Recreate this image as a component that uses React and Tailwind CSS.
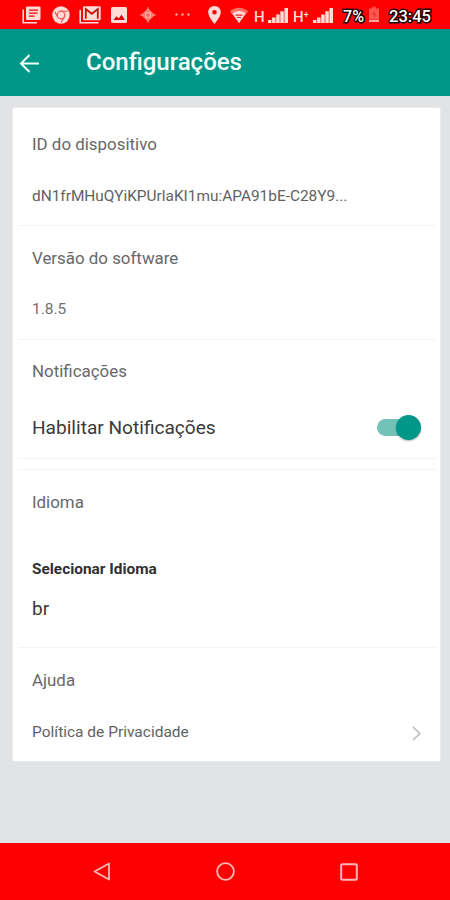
import { clsx } from 'clsx';

function StatusBar() {
  return (
    <div className="flex h-[29px] items-start bg-[#ff0000] pl-[22px] pt-[6px] text-[#ffdcd8]">
      <svg className="h-[18px] w-[19px] shrink-0" viewBox="0 0 19 18" fill="none">
        <path d="M1.2 3.5V16.8H15" stroke="currentColor" strokeWidth="1.6" />
        <rect x="4" y="0.5" width="14.5" height="13.5" rx="1" fill="currentColor" />
        <path d="M7 4.2h9M7 7.2h8.5M7 10.2h5.5" stroke="#f00000" strokeWidth="1.3" />
      </svg>
      <svg className="ml-[11px] h-[18px] w-[18px] shrink-0" viewBox="0 0 18 18" fill="none">
        <circle cx="9" cy="9" r="8.7" fill="currentColor" />
        <circle cx="9" cy="9" r="3.8" stroke="#f05050" strokeWidth="1.2" />
        <path d="M9 5.2h6.8M5.7 11 2.7 5.5M12.3 11 9 16.5" stroke="#f05050" strokeWidth="1.1" />
      </svg>
      <svg className="ml-[9px] h-[18px] w-[22px] shrink-0" viewBox="0 0 22 18" fill="none">
        <path d="M1.2 4V16.8H19.5" stroke="currentColor" strokeWidth="1.6" />
        <rect x="4" y="0.3" width="17.7" height="14" rx="1.2" fill="currentColor" />
        <path d="M6.8 12.8V3l6 4.8 6-4.8v9.8" stroke="#cc1008" strokeWidth="1.8" />
      </svg>
      <svg className="ml-[10px] mt-px h-[16px] w-[16px] shrink-0" viewBox="0 0 16 16">
        <rect width="16" height="16" rx="1.5" fill="currentColor" />
        <path d="M2.5 13 5.5 9.3 7.6 11.6 10.5 7.8 13.8 13Z" fill="#dd0000" />
      </svg>
      <svg className="ml-[13px] mt-px h-[16px] w-[16px] shrink-0 text-[#ff8a80]" viewBox="0 0 16 16" fill="none">
        <path d="M8 0v16M0 8h16" stroke="currentColor" strokeWidth="1" />
        <path d="M8 2 14 8 8 14 2 8Z" fill="#ff6a62" stroke="currentColor" strokeWidth="1.2" />
        <circle cx="8" cy="8" r="2.6" stroke="#ffb0a8" strokeWidth="1.2" />
      </svg>
      <svg className="ml-[18px] mt-[7px] h-[3px] w-[17px] shrink-0 text-[#ffa8a0]" viewBox="0 0 17 3" fill="currentColor">
        <circle cx="2.5" cy="1.5" r="1.2" />
        <circle cx="8.5" cy="1.5" r="1.2" />
        <circle cx="14.5" cy="1.5" r="1.2" />
      </svg>
      <svg className="ml-[17px] h-[18px] w-[13px] shrink-0" viewBox="0 0 13 18">
        <path
          d="M6.5 0C2.9 0 .2 2.8.2 6.3.2 11 6.5 18 6.5 18s6.3-7 6.3-11.7C12.8 2.8 10.1 0 6.5 0Zm0 8.6a2.3 2.3 0 1 1 0-4.6 2.3 2.3 0 0 1 0 4.6Z"
          fill="currentColor"
        />
      </svg>
      <svg className="ml-[9px] mt-px h-[16px] w-[18px] shrink-0" viewBox="0 0 18 16" fill="none">
        <path d="M0 4.2C5.2-.5 12.8-.5 18 4.2L9 16Z" fill="#ff7068" />
        <path d="M2.4 6.5C6.3 3 11.7 3 15.6 6.5L9 16Z" fill="currentColor" />
        <path d="M5.5 8.1h7M7 10.5h4" stroke="#f02020" strokeWidth="1.2" />
      </svg>
      <NetworkLabel className="ml-[6px] w-[14px]">H</NetworkLabel>
      <Signal />
      <NetworkLabel className="ml-[5px] w-[20px]">
        H<span className="relative -top-[4px] text-[9px]">+</span>
      </NetworkLabel>
      <Signal />
      <OutlinedText x={1} width={21} className="ml-[9px] w-[24px]">7%</OutlinedText>
      <svg className="ml-[3px] h-[17px] w-[10px] shrink-0" viewBox="0 0 11 17">
        <path d="M3.5 0h4v2H11v12H0V2h3.5Z" fill="#ff5850" />
        <path d="M6 4 3.5 8.5h2V12L8 7.5H6Z" fill="#f03028" />
        <rect y="14.5" width="11" height="2.2" fill="#ffb0aa" />
      </svg>
      <OutlinedText x={3} width={42} className="ml-[7px] w-[46px]">23:45</OutlinedText>
    </div>
  );
}

function NetworkLabel({ className, children }) {
  return (
    <span className={clsx('mt-[3px] shrink-0 whitespace-nowrap font-[Roboto] text-[15px] font-medium leading-[17px]', className)}>
      {children}
    </span>
  );
}

function Signal() {
  return (
    <svg className="mt-[2px] h-[15px] w-[20px] shrink-0" viewBox="0 0 20 15" fill="currentColor">
      <path d="M0 12h3.5v3H0zM4.1 9.5h3.5V15H4.1zM8.2 6.5h3.5V15H8.2zM12.3 3.2h3.5V15h-3.5zM16.4 0H20v15h-3.6z" />
    </svg>
  );
}

function OutlinedText({ x, width, className, children }) {
  return (
    <svg className={clsx('h-[21px] shrink-0 overflow-visible', className)}>
      <text
        x={x}
        y="16.3"
        textLength={width}
        lengthAdjust="spacingAndGlyphs"
        className="fill-white stroke-[#200000] stroke-3 font-[Roboto] text-[17px] font-medium [paint-order:stroke]"
      >
        {children}
      </text>
    </svg>
  );
}

function Header() {
  return (
    <header className="flex h-[67px] items-start bg-[#009788] pl-[19px] text-[#f4fffc]">
      <svg className="mt-[25px] h-[19px] w-[21px]" viewBox="0 0 21 19" fill="none" stroke="currentColor" strokeWidth="2">
        <path d="M20 9.5H2M10.5 1 2 9.5l8.5 8.5" />
      </svg>
      <h1 className="ml-[46px] mt-[17px] text-[24px] font-medium leading-[32px]">Configurações</h1>
    </header>
  );
}

function Section({ title, className, children }) {
  return (
    <section className={clsx('pl-[19px] pr-[19px]', className)}>
      <h2 className="text-[16.9px] leading-[20px] text-[#686868]">{title}</h2>
      {children}
    </section>
  );
}

function Divider() {
  return <div className="ml-[5px] mr-[4px] h-px shrink-0 bg-[#f3f3f3]" />;
}

function Toggle() {
  return (
    <button role="switch" aria-checked="true" aria-label="Habilitar Notificações" className="flex h-[25px] w-[44px] items-center">
      <span className="h-[17px] w-[32px] rounded-full bg-[#73c2b7]" />
      <span className="-ml-[13px] size-[25px] shrink-0 rounded-full bg-[#009788] shadow-[0_1px_2px_rgba(0,0,0,0.3)]" />
    </button>
  );
}

export default function App() {
  return (
    <div className="flex h-[900px] w-[450px] flex-col overflow-hidden bg-[#e2e3e5] font-[Roboto,sans-serif]">
      <StatusBar />
      <Header />

      <main className="flex-1 pl-[13px] pr-[10px] pt-[12px]">
        <div className="flex h-[653px] flex-col bg-white shadow-[0_0_2px_rgba(255,255,255,0.9)]">
          <Section title="ID do dispositivo" className="h-[117px] pt-[26px]">
            <p className="mt-[32px] whitespace-nowrap text-[15.42px] leading-[20px] text-[#626262]">
              dN1frMHuQYiKPUrlaKI1mu:APA91bE-C28Y9...
            </p>
          </Section>
          <Divider />
          <Section title="Versão do software" className="h-[113px] pt-[22px]">
            <p className="mt-[31px] text-[15.5px] leading-[20px] text-[#707070]">1.8.5</p>
          </Section>
          <Divider />
          <Section title="Notificações" className="h-[118px] pt-[21px]">
            <div className="mt-[34px] flex items-center justify-between">
              <span className="text-[19.1px] leading-[25px] text-[#3a3a3a]">Habilitar Notificações</span>
              <Toggle />
            </div>
          </Section>
          <Divider />
          <div className="h-[10px]" />
          <Divider />
          <Section title="Idioma" className="h-[177px] pt-[22px]">
            <p className="mt-[47px] text-[15.4px] font-bold leading-[20px] text-[#303030]">Selecionar Idioma</p>
            <p className="mt-[18px] text-[19px] leading-[24px] text-[#3a3a3a]">br</p>
          </Section>
          <Divider />
          <Section title="Ajuda" className="pt-[22px]">
            <div className="mt-[32px] flex items-center justify-between">
              <span className="text-[15.5px] leading-[20px] text-[#626262]">Política de Privacidade</span>
              <svg className="mt-[3px] h-[15px] w-[9px]" viewBox="0 0 9 15" fill="none" stroke="#bcbcbc" strokeWidth="1.6">
                <path d="M1 1l6.8 6.5L1 14" />
              </svg>
            </div>
          </Section>
        </div>
      </main>

      <nav className="flex h-[57px] items-center bg-[#ff0000] pl-[93px] text-[#ffb8b8]">
        <svg className="h-[19px] w-[18px]" viewBox="0 0 18 19" fill="none" stroke="currentColor" strokeWidth="1.8" strokeLinejoin="round">
          <path d="M16 1.5v16L1.5 9.5Z" />
        </svg>
        <svg className="ml-[105px] size-[19px]" viewBox="0 0 19 19" fill="none" stroke="currentColor" strokeWidth="1.8">
          <circle cx="9.5" cy="9.5" r="8.4" />
        </svg>
        <svg className="ml-[105px] size-[18px]" viewBox="0 0 18 18" fill="none" stroke="currentColor" strokeWidth="2">
          <rect x="1.2" y="1.2" width="15.6" height="15.6" rx="1" />
        </svg>
      </nav>
    </div>
  );
}
